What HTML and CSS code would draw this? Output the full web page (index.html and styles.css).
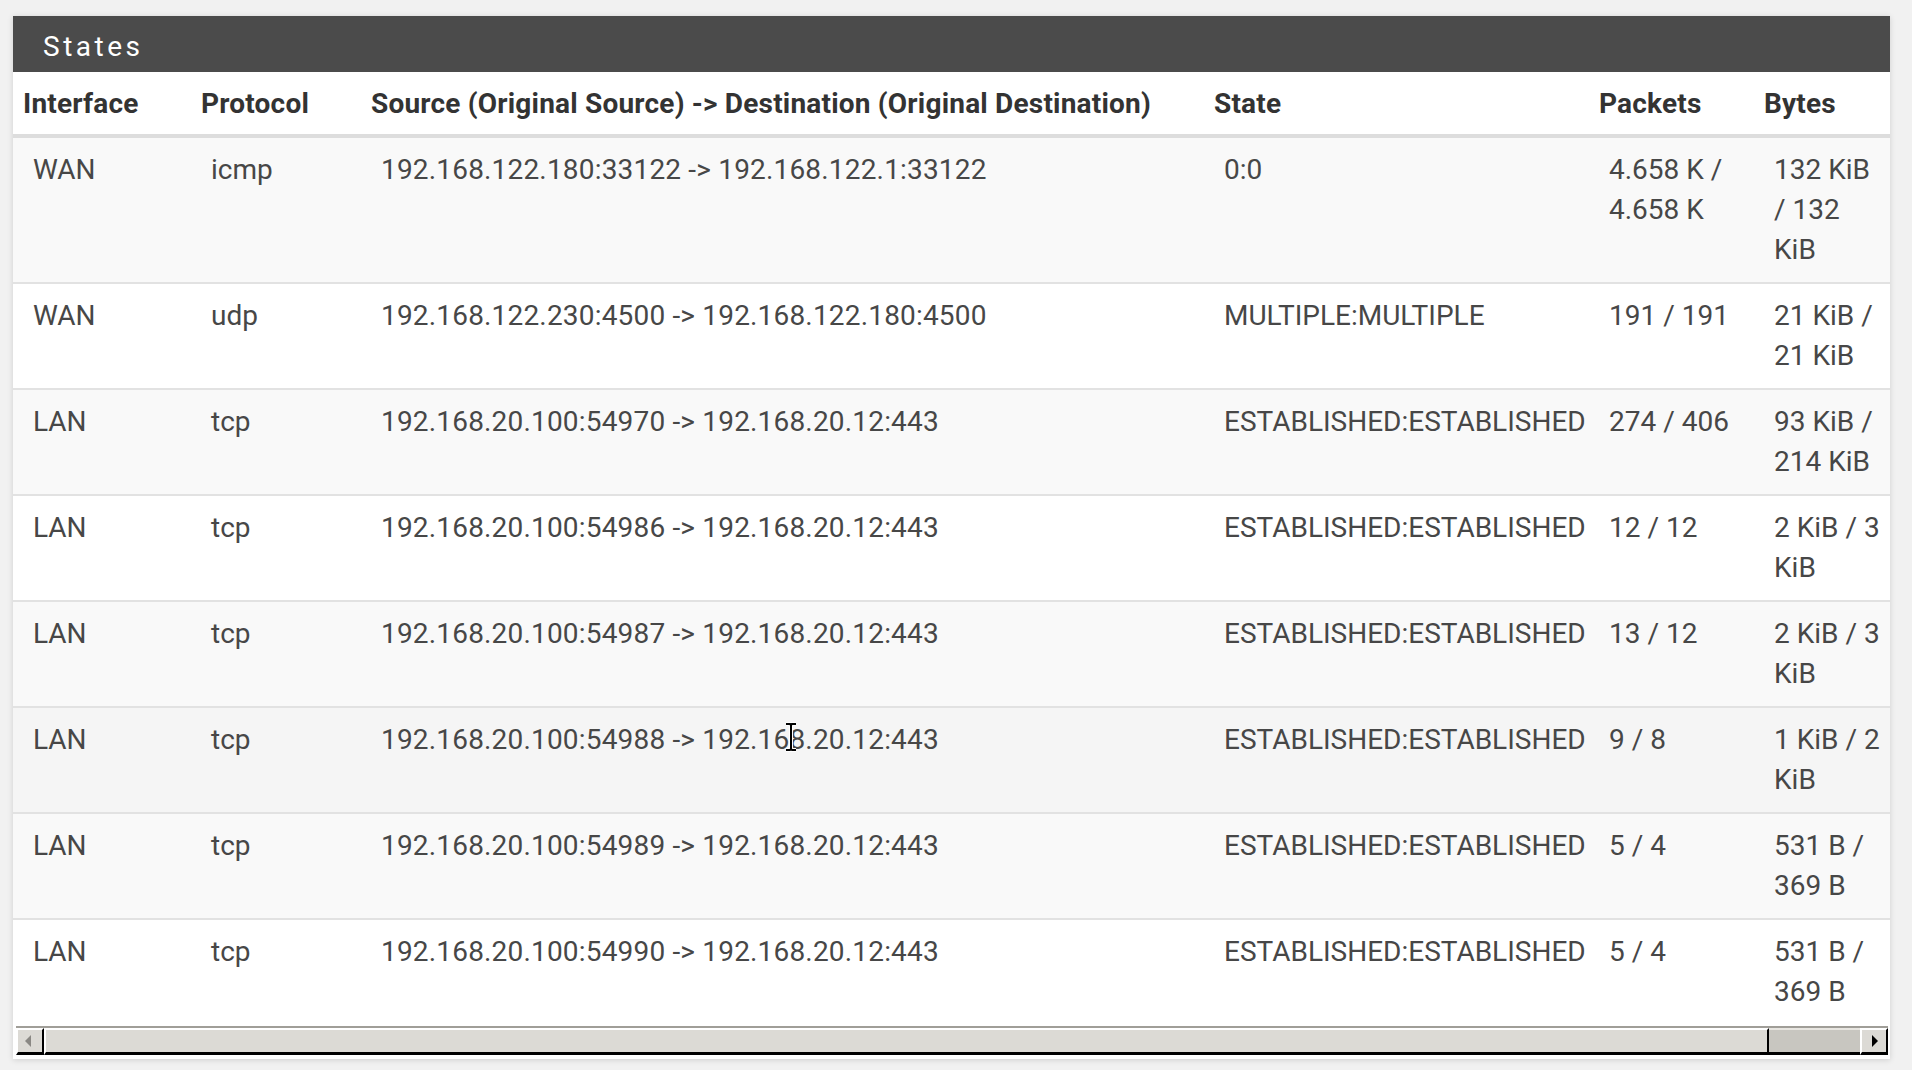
FILE: index.html
```html
<!DOCTYPE html>
<html lang="en">
<head>
<meta charset="utf-8">
<title>States</title>
<link rel="stylesheet" href="styles.css">
</head>
<body>
<div class="panel">
  <div class="panel-heading"><h2 class="panel-title">States</h2></div>
  <div class="panel-body">
    <div class="table-wrap">
      <table class="states">
        <colgroup>
          <col class="c-if"><col class="c-proto"><col class="c-src"><col class="c-state"><col class="c-pkts"><col class="c-bytes"><col class="c-act">
        </colgroup>
        <thead>
          <tr><th>Interface</th><th>Protocol</th><th>Source (Original Source) -&gt; Destination (Original Destination)</th><th>State</th><th>Packets</th><th>Bytes</th><th></th></tr>
        </thead>
        <tbody>
          <tr><td>WAN</td><td>icmp</td><td class="addr">192.168.122.180:33122 -&gt; 192.168.122.1:33122</td><td>0:0</td><td>4.658 K / 4.658 K</td><td>132 KiB / 132 KiB</td><td></td></tr>
          <tr><td>WAN</td><td>udp</td><td class="addr">192.168.122.230:4500 -&gt; 192.168.122.180:4500</td><td>MULTIPLE:MULTIPLE</td><td>191 / 191</td><td>21 KiB / 21 KiB</td><td></td></tr>
          <tr><td>LAN</td><td>tcp</td><td class="addr">192.168.20.100:54970 -&gt; 192.168.20.12:443</td><td>ESTABLISHED:ESTABLISHED</td><td>274 / 406</td><td>93 KiB / 214 KiB</td><td></td></tr>
          <tr><td>LAN</td><td>tcp</td><td class="addr">192.168.20.100:54986 -&gt; 192.168.20.12:443</td><td>ESTABLISHED:ESTABLISHED</td><td>12 / 12</td><td>2 KiB / 3 KiB</td><td></td></tr>
          <tr><td>LAN</td><td>tcp</td><td class="addr">192.168.20.100:54987 -&gt; 192.168.20.12:443</td><td>ESTABLISHED:ESTABLISHED</td><td>13 / 12</td><td>2 KiB / 3 KiB</td><td></td></tr>
          <tr class="hover"><td>LAN</td><td>tcp</td><td class="addr">192.168.20.100:54988 -&gt; 192.168.20.12:443</td><td>ESTABLISHED:ESTABLISHED</td><td>9 / 8</td><td>1 KiB / 2 KiB</td><td></td></tr>
          <tr><td>LAN</td><td>tcp</td><td class="addr">192.168.20.100:54989 -&gt; 192.168.20.12:443</td><td>ESTABLISHED:ESTABLISHED</td><td>5 / 4</td><td>531 B / 369 B</td><td></td></tr>
          <tr><td>LAN</td><td>tcp</td><td class="addr">192.168.20.100:54990 -&gt; 192.168.20.12:443</td><td>ESTABLISHED:ESTABLISHED</td><td>5 / 4</td><td>531 B / 369 B</td><td></td></tr>
        </tbody>
      </table>
    </div>
    <div class="hscroll">
      <div class="sb-btn"><span class="arrow-left"></span></div>
      <div class="sb-thumb"></div>
      <div class="sb-track"></div>
      <div class="sb-btn"><span class="arrow-right"></span></div>
    </div>
  </div>
</div>
<svg class="ibeam" width="14" height="30" viewBox="0 0 14 30">
  <path d="M2 2h4l1 1 1-1h4M7 3v24M2 28h4l1-1 1 1h4" fill="none" stroke="#fff" stroke-width="4"/>
  <path d="M2 2h4l1 1 1-1h4M7 3v24M2 28h4l1-1 1 1h4" fill="none" stroke="#000" stroke-width="2"/>
</svg>
</body>
</html>
```

FILE: styles.css
```css
html, body {
  margin: 0;
  padding: 0;
}
body {
  background: #f1f1f1;
  padding: 16px 22px 0 13px;
  font-family: Roboto, "Liberation Sans", sans-serif;
  color: #474747;
  position: relative;
  height: 1070px;
  box-sizing: border-box;
  overflow: hidden;
}
.panel {
  background: #fff;
  box-shadow: 0 1px 6px rgba(0, 0, 0, 0.14);
}
.panel-heading {
  background: #4b4b4b;
  height: 56px;
  box-sizing: border-box;
  padding: 5px 30px 0;
  display: flex;
  align-items: center;
}
.panel-title {
  margin: 0;
  color: #fff;
  font-size: 28px;
  font-weight: 400;
  letter-spacing: 3.5px;
  line-height: 40px;
}
.panel-body {
  padding: 0 0 4px 0;
}
.table-wrap {
  overflow: hidden;
  padding-bottom: 2px;
}
.states {
  table-layout: fixed;
  width: 1977px;
  border-collapse: collapse;
  font-size: 28px;
  line-height: 40px;
}
.c-if { width: 178px; }
.c-proto { width: 170px; }
.c-src { width: 843px; }
.c-state { width: 385px; }
.c-pkts { width: 165px; }
.c-bytes { width: 150px; }
.c-act { width: 86px; }
.states th {
  text-align: left;
  font-weight: 700;
  color: #333;
  letter-spacing: 0.2px;
  padding: 12px 4px 10px 10px;
  border-bottom: 4px solid #dddddd;
  white-space: nowrap;
}
.states td {
  vertical-align: top;
  padding: 12px 20px 12px 20px;
  border-top: 2px solid #e2e2e2;
}
.states td.addr {
  letter-spacing: 0.18px;
}
.states td:nth-child(4) {
  padding-right: 2px;
}
.states tbody tr:nth-child(odd) {
  background: #f9f9f9;
}
.states tbody tr.hover {
  background: #f5f5f5;
}
.hscroll {
  display: flex;
  height: 27px;
  border-top: 2px solid #a09e98;
  background: #c8c6c0;
  margin: 0 2px 0 3px;
}
.sb-btn, .sb-thumb {
  box-sizing: border-box;
  background: #dcdad5;
  border-top: 2px solid #fff;
  border-left: 2px solid #fff;
  border-right: 2px solid #000;
  border-bottom: 3px solid #000;
}
.sb-btn {
  width: 28px;
  flex: none;
  display: flex;
  align-items: center;
  justify-content: center;
}
.sb-thumb {
  width: 1725px;
  flex: none;
}
.sb-track {
  flex: 1;
  border-bottom: 3px solid #000;
  border-top: 2px solid #e8e6e1;
  box-sizing: border-box;
}
.arrow-left {
  width: 0;
  height: 0;
  border-top: 6px solid transparent;
  border-bottom: 6px solid transparent;
  border-right: 6px solid #8a8884;
  margin-right: 4px;
}
.arrow-right {
  width: 0;
  height: 0;
  border-top: 6px solid transparent;
  border-bottom: 6px solid transparent;
  border-left: 6px solid #000;
  margin-left: 2px;
}
.ibeam {
  position: absolute;
  left: 784px;
  top: 722px;
}
```
